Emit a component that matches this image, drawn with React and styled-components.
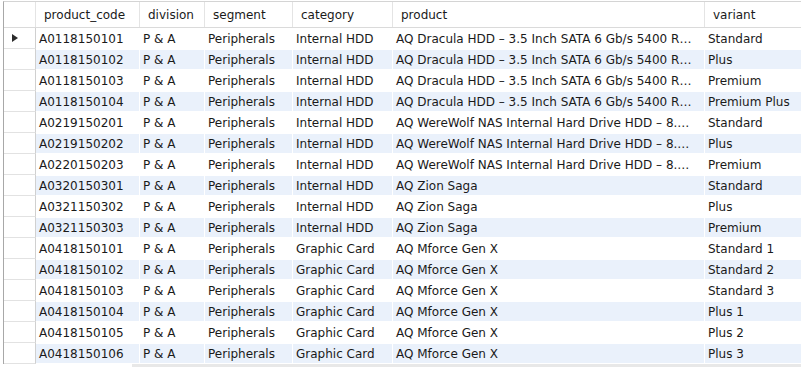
import React from 'react';
import styled, { createGlobalStyle } from 'styled-components';

const GlobalStyle = createGlobalStyle`
  html, body {
    margin: 0;
    padding: 0;
    background: #fff;
  }
`;

const COLS = '32px 104px 65px 88px 100px 312px 120px';

const rows = [
  ['A0118150101', 'Internal HDD', 'AQ Dracula HDD – 3.5 Inch SATA 6 Gb/s 5400 R…', 'Standard'],
  ['A0118150102', 'Internal HDD', 'AQ Dracula HDD – 3.5 Inch SATA 6 Gb/s 5400 R…', 'Plus'],
  ['A0118150103', 'Internal HDD', 'AQ Dracula HDD – 3.5 Inch SATA 6 Gb/s 5400 R…', 'Premium'],
  ['A0118150104', 'Internal HDD', 'AQ Dracula HDD – 3.5 Inch SATA 6 Gb/s 5400 R…', 'Premium Plus'],
  ['A0219150201', 'Internal HDD', 'AQ WereWolf NAS Internal Hard Drive HDD – 8.…', 'Standard'],
  ['A0219150202', 'Internal HDD', 'AQ WereWolf NAS Internal Hard Drive HDD – 8.…', 'Plus'],
  ['A0220150203', 'Internal HDD', 'AQ WereWolf NAS Internal Hard Drive HDD – 8.…', 'Premium'],
  ['A0320150301', 'Internal HDD', 'AQ Zion Saga', 'Standard'],
  ['A0321150302', 'Internal HDD', 'AQ Zion Saga', 'Plus'],
  ['A0321150303', 'Internal HDD', 'AQ Zion Saga', 'Premium'],
  ['A0418150101', 'Graphic Card', 'AQ Mforce Gen X', 'Standard 1'],
  ['A0418150102', 'Graphic Card', 'AQ Mforce Gen X', 'Standard 2'],
  ['A0418150103', 'Graphic Card', 'AQ Mforce Gen X', 'Standard 3'],
  ['A0418150104', 'Graphic Card', 'AQ Mforce Gen X', 'Plus 1'],
  ['A0418150105', 'Graphic Card', 'AQ Mforce Gen X', 'Plus 2'],
  ['A0418150106', 'Graphic Card', 'AQ Mforce Gen X', 'Plus 3'],
];

const headers = ['product_code', 'division', 'segment', 'category', 'product', 'variant'];

const Page = styled.div`
  width: 801px;
  height: 367px;
  overflow: hidden;
  padding: 1px 0 0 3px;
  box-sizing: border-box;
  display: flex;
  flex-direction: column;
  font-family: "DejaVu Sans", "Noto Sans", sans-serif;
  font-size: 12px;
  color: #1a1a1a;
`;

const Grid = styled.div`
  border-top: 1px solid #d4d4d4;
  border-left: 1px solid #a8a8a8;
`;

const HeaderRow = styled.div`
  display: grid;
  grid-template-columns: ${COLS};
  height: 26px;
  border-bottom: 1px solid #dadada;
  box-sizing: border-box;
`;

const HeadCell = styled.div`
  border-right: 1px solid #e4e4e4;
  padding-left: 8px;
  padding-top: 1px;
  display: flex;
  align-items: center;
  white-space: nowrap;
  overflow: hidden;
  &:last-child {
    border-right: none;
  }
`;

const Row = styled.div`
  display: grid;
  grid-template-columns: ${COLS};
  height: 21px;
`;

const Marker = styled.div`
  border-right: 1px solid #d0d0d0;
  border-bottom: 1px solid #e2e2e2;
  box-sizing: border-box;
  display: flex;
  align-items: center;
  padding-left: 8px;
`;

const Arrow = styled.span`
  width: 0;
  height: 0;
  border-top: 4.5px solid transparent;
  border-bottom: 4.5px solid transparent;
  border-left: 6px solid #2b2b2b;
`;

const Cell = styled.div`
  box-sizing: border-box;
  border: 1px solid #fff;
  border-left-width: 0;
  background: ${p => (p.$alt ? '#eaf1fb' : '#fff')};
  padding-left: 3px;
  display: flex;
  align-items: center;
  white-space: nowrap;
  overflow: hidden;
`;

const Scrollbar = styled.div`
  height: 4px;
  margin-top: auto;
  padding-left: 129px;
`;

const Thumb = styled.div`
  height: 100%;
  background: #e8e8e8;
`;

export default function App() {
  return (
    <Page>
      <GlobalStyle />
      <Grid>
        <HeaderRow>
          <HeadCell />
          {headers.map(h => (
            <HeadCell key={h}>{h}</HeadCell>
          ))}
        </HeaderRow>
        {rows.map(([code, category, product, variant], i) => {
          const alt = i % 2 === 1;
          return (
            <Row key={code + i}>
              <Marker>{i === 0 && <Arrow />}</Marker>
              <Cell $alt={alt}>{code}</Cell>
              <Cell $alt={alt}>P &amp; A</Cell>
              <Cell $alt={alt}>Peripherals</Cell>
              <Cell $alt={alt}>{category}</Cell>
              <Cell $alt={alt}>{product}</Cell>
              <Cell $alt={alt}>{variant}</Cell>
            </Row>
          );
        })}
      </Grid>
      <Scrollbar>
        <Thumb />
      </Scrollbar>
    </Page>
  );
}
